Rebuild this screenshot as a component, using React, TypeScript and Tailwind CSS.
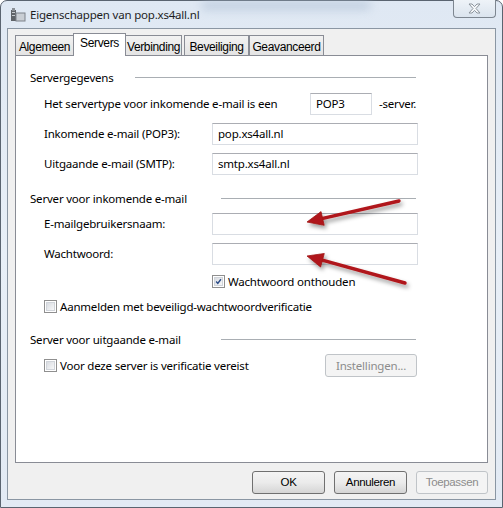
import type { ReactNode } from 'react';

const ui = { fontFamily: '"Noto Sans", "Open Sans", sans-serif', letterSpacing: '-0.2px' };
const classic = { fontFamily: '"Liberation Sans", Arial, sans-serif', letterSpacing: '-0.35px' };

function GroupHeader({ title, textWidth }: { title: string; textWidth: string }) {
  return (
    <div className="flex h-[15px] w-[386px] items-center">
      <span className={`${textWidth} shrink-0 leading-[15px]`}>{title}</span>
      <div className="h-px flex-1 bg-[#a9aeb3]" />
    </div>
  );
}

function TextBox({ value, className = '' }: { value?: string; className?: string }) {
  return (
    <div
      className={`flex h-[22px] items-center border border-[#d9dde3] border-t-[#abadb3] bg-white px-[5px] ${className}`}
    >
      {value}
    </div>
  );
}

function CheckBox({ checked }: { checked?: boolean }) {
  return (
    <div className="flex h-[13px] w-[13px] shrink-0 items-center justify-center border border-[#8f8f8f] bg-white">
      <div className="flex h-[9px] w-[9px] items-center justify-center border border-[#d0d4da] bg-gradient-to-br from-[#d9dce1] to-[#f7f8f9]">
        {checked && (
          <svg width="9" height="9" viewBox="0 0 9 9">
            <path d="M1.5 4.6 L3.6 7 L7.6 1.6" fill="none" stroke="#2a4b87" strokeWidth="1.8" />
          </svg>
        )}
      </div>
    </div>
  );
}

function Button({ children, disabled, className = '' }: { children: ReactNode; disabled?: boolean; className?: string }) {
  return (
    <div
      style={classic}
      className={`flex items-center justify-center rounded-[3px] border text-[11.5px] ${
        disabled
          ? 'border-[#c0c4c8] bg-[#f4f4f4] text-[#8c8c8c]'
          : 'border-[#707070] bg-gradient-to-b from-[#f4f4f4] via-[#ebebeb] to-[#d5d5d5] text-black'
      } ${className}`}
    >
      {children}
    </div>
  );
}

function Tab({ label, active, width }: { label: string; active?: boolean; width: string }) {
  return active ? (
    <div
      className={`relative z-10 -mx-px flex h-[23px] items-center justify-center border border-b-0 border-[#898c95] bg-white pb-[4px] ${width}`}
    >
      {label}
    </div>
  ) : (
    <div
      className={`mt-[2px] flex h-[21px] items-center justify-center border border-b-0 border-[#898c95] bg-gradient-to-b from-[#f2f2f2] to-[#e3e3e3] pt-[2px] ${width}`}
    >
      {label}
    </div>
  );
}

function Arrow({ x1, y1, x2, y2 }: { x1: number; y1: number; x2: number; y2: number }) {
  const dx = x2 - x1;
  const dy = y2 - y1;
  const len = Math.hypot(dx, dy);
  const ux = dx / len;
  const uy = dy / len;
  const bx = x2 - ux * 16;
  const by = y2 - uy * 16;
  const head = `${x2},${y2} ${bx - uy * 7},${by + ux * 7} ${bx + uy * 7},${by - ux * 7}`;
  return (
    <g filter="url(#arrow-shadow)">
      <line x1={x1} y1={y1} x2={bx + ux * 2} y2={by + uy * 2} stroke="#b0161a" strokeWidth="3.4" strokeLinecap="round" />
      <polygon points={head} fill="#b0161a" strokeLinejoin="round" stroke="#a01417" strokeWidth="0.8" />
    </g>
  );
}

export default function App() {
  return (
    <div style={ui} className="relative h-[508px] w-[503px] overflow-hidden bg-white text-[11.5px] text-black">
      {/* Aero frame */}
      <div className="flex h-[508px] w-[503px] flex-col rounded-t-[7px] border border-[#5a6470] bg-gradient-to-b from-[#dfe8f3] via-[#e8eff7] to-[#e2eaf4]">
        {/* Title bar */}
        <div className="relative flex h-[27px] shrink-0 items-center pl-[9px]">
          <div className="pointer-events-none absolute left-[200px] top-[0px] h-[9px] w-[170px] rounded-full bg-[#aebfd4] opacity-60 blur-[5px]" />
          <svg width="16" height="16" viewBox="0 0 16 16" className="relative">
            <rect x="1" y="3" width="5" height="11" fill="#5f6368" />
            <rect x="2" y="1" width="3" height="3" fill="#8a8f95" />
            <rect x="6" y="6" width="9" height="8" fill="#c9ced4" stroke="#7c828a" strokeWidth="1" />
            <rect x="2" y="5" width="3" height="1" fill="#c8ccd0" />
            <rect x="2" y="8" width="3" height="1" fill="#c8ccd0" />
          </svg>
          <span className="relative ml-[4px] text-[11.5px] text-[#1e1e1e]">Eigenschappen van pop.xs4all.nl</span>
          <div className="absolute right-[6px] top-[-1px] flex h-[18px] w-[43px] items-center justify-center rounded-b-[4px] border border-t-0 border-[#7d8690] bg-gradient-to-b from-[#eef3f8] to-[#dbe4ee]">
            <svg width="13" height="11" viewBox="0 0 13 11">
              <path
                d="M1 1 H4 L6.5 3.6 L9 1 H12 L8 5.5 L12 10 H9 L6.5 7.4 L4 10 H1 L5 5.5 Z"
                fill="#f7f9fb"
                stroke="#8c949c"
                strokeWidth="1"
                strokeLinejoin="round"
              />
            </svg>
          </div>
        </div>

        {/* Client area */}
        <div className="mx-[6px] flex h-[472px] flex-col border border-[#8a96a3] bg-[#f0f0f0] px-[7px] pt-[4px]">
          {/* Tab strip */}
          <div style={classic} className="flex h-[23px] items-start text-[12px]">
            <Tab label="Algemeen" width="w-[59px]" />
            <Tab label="Servers" width="w-[53px]" active />
            <Tab label="Verbinding" width="w-[57px]" />
            <div className="w-[2px]" />
            <Tab label="Beveiliging" width="w-[65px]" />
            <Tab label="Geavanceerd" width="w-[75px]" />
          </div>

          {/* Tab page */}
          <div className="-mt-px flex h-[408px] w-[473px] flex-col border border-[#898c95] bg-white pl-[14px] pt-[14px]">
            <GroupHeader title="Servergegevens" textWidth="w-[105px]" />

            <div className="mt-[8px] flex h-[22px] items-center pl-[14px]">
              <span className="w-[266px]">Het servertype voor inkomende e-mail is een</span>
              <TextBox value="POP3" className="w-[62px]" />
              <span className="ml-[7px]">-server.</span>
            </div>
            <div className="mt-[8px] flex h-[22px] items-center pl-[14px]">
              <span className="w-[168px]">Inkomende e-mail (POP3):</span>
              <TextBox value="pop.xs4all.nl" className="w-[206px]" />
            </div>
            <div className="mt-[8px] flex h-[22px] items-center pl-[14px]">
              <span className="w-[168px]">Uitgaande e-mail (SMTP):</span>
              <TextBox value="smtp.xs4all.nl" className="w-[206px]" />
            </div>

            <div className="mt-[16px]">
              <GroupHeader title="Server voor inkomende e-mail" textWidth="w-[191px]" />
            </div>
            <div className="mt-[7px] flex h-[22px] items-center pl-[14px]">
              <span className="w-[168px]">E-mailgebruikersnaam:</span>
              <TextBox className="w-[206px]" />
            </div>
            <div className="mt-[8px] flex h-[22px] items-center pl-[14px]">
              <span className="w-[168px]">Wachtwoord:</span>
              <TextBox className="w-[206px]" />
            </div>
            <div className="mt-[10px] flex h-[13px] items-center gap-[3px] pl-[182px]">
              <CheckBox checked />
              <span>Wachtwoord onthouden</span>
            </div>
            <div className="mt-[12px] flex h-[13px] items-center gap-[3px] pl-[14px]">
              <CheckBox />
              <span>Aanmelden met beveiligd-wachtwoordverificatie</span>
            </div>

            <div className="mt-[19px]">
              <GroupHeader title="Server voor uitgaande e-mail" textWidth="w-[191px]" />
            </div>
            <div className="mt-[7px] flex h-[23px] w-[387px] items-center pl-[14px]">
              <CheckBox />
              <span className="ml-[3px]">Voor deze server is verificatie vereist</span>
              <Button disabled className="ml-auto h-[23px] w-[92px]">
                <span style={ui} className="text-[11.5px]">Instellingen...</span>
              </Button>
            </div>
          </div>

          {/* Dialog buttons */}
          <div className="mt-[8px] flex h-[23px] w-[473px] justify-end gap-[9px]">
            <Button className="h-[23px] w-[73px]">OK</Button>
            <Button className="h-[23px] w-[73px]">Annuleren</Button>
            <Button disabled className="h-[23px] w-[72px]">Toepassen</Button>
          </div>
        </div>
      </div>

      {/* Red callout arrows */}
      <svg className="pointer-events-none absolute left-0 top-0" width="503" height="508">
        <defs>
          <filter id="arrow-shadow" x="-20%" y="-60%" width="140%" height="220%">
            <feDropShadow dx="2" dy="3" stdDeviation="2" floodColor="#000" floodOpacity="0.4" />
          </filter>
        </defs>
        <Arrow x1={399} y1={201} x2={307} y2={222} />
        <Arrow x1={405} y1={283} x2={307} y2={256} />
      </svg>
    </div>
  );
}
